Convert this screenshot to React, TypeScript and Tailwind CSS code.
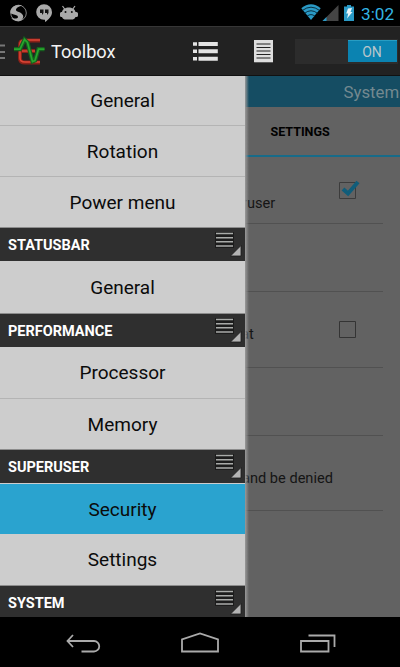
import React from "react";

function Item({ label, h, active, line }: { label: string; h: string; active?: boolean; line?: boolean }) {
  return (
    <div
      className={`${h} flex shrink-0 items-center justify-center pt-[2px] text-[19px] text-[#0b0b0b] ${
        active ? "bg-[#2aa3cf]" : "bg-[#cdcdcd]"
      } ${line ? "border-b border-[#b4b4b4]" : ""}`}
    >
      {label}
    </div>
  );
}

function Header({ label, h }: { label: string; h: string }) {
  return (
    <div className={`${h} flex shrink-0 justify-between overflow-hidden border-t border-[#8c8c8c] bg-[#2f2f2f] pl-2`}>
      <span className="pt-[8px] text-[14.5px] leading-5 font-bold text-white">{label}</span>
      <svg className="shrink-0" width="33" height="34" viewBox="0 0 33 34">
        <path d="M3 4h19v16H3z" fill="#1c1c1c" />
        <path d="M4 5.500h17M4 9.700h17M4 13.800h17M4 18h17" stroke="#a9aba9" strokeWidth="1.6" />
        <path d="M18.500 28L29 17.500v10.500z" fill="#b4b4b4" stroke="#1b1b1b" strokeWidth="0.8" />
      </svg>
    </div>
  );
}

function StatusBar() {
  return (
    <div className="flex h-[26px] shrink-0 items-center bg-black">
      <svg width="90" height="26" viewBox="0 0 90 26">
        <circle cx="18.5" cy="13" r="7.8" fill="none" stroke="#8f8f8f" strokeWidth="0.9" />
        <path d="M22 5.500C15 3.500 9.500 8 10.500 13C12.500 15 18 14.500 18 17C18 19 13 19 11 17.500C14 22 20 22.500 22.500 19C25 15 21 12.500 17.500 11.500C14.500 10.500 16 7 22 5.500z" fill="#aaa" />
        <path d="M44 4.200a8 8 0 0 1 8 8c0 4-3.500 7.500-7 9.800v-2.200h-1a7.800 7.800 0 0 1 0-15.600z" fill="#aaa" />
        <path d="M40 9.500h3.500v3.500l-1.500 2v-2h-2zM45 9.500h3.500v3.500l-1.500 2v-2h-2z" fill="#111" />
        <path d="M62.500 6l2.500 3.500M75 6l-2.500 3.500" stroke="#aaa" strokeWidth="1.200" />
        <path d="M62 12c1-6 12.500-6 13.500 0q2.500-.5 2.500 1.500v2q0 2-2.500 1.500c-1 3-3 2.500-6.800 2.500s-5.700 .5-6.700-2.500q-2 .5-2-1.500v-2q0-2 2-1.500z" fill="#aaa" />
        <circle cx="65.500" cy="12" r="1" fill="#111" />
        <circle cx="71.800" cy="12" r="1" fill="#111" />
      </svg>
      <div className="flex-1" />
      <svg width="60" height="26" viewBox="300 0 60 26">
        <path d="M301.300 8.200Q311 0.500 320.700 8.200L311 20z" fill="#2a9ac6" />
        <path d="M302.500 10.400Q311 4 319.500 10.400M304.500 13.300Q311 8.200 317.500 13.300M307 16.200Q311 13 315 16.200" fill="none" stroke="#052330" strokeWidth="0.9" />
        <path d="M338.500 5v16h-16z" fill="#444" />
        <path d="M322.500 21l4-4v4z" fill="#2a9ac6" />
        <path d="M347 5h4v1.500h3V21h-10V6.500h3z" fill="#2a9ac6" />
        <path d="M348 8.500l4-.5-1.500 4h2l-5.500 6.500 1.200-5h-2z" fill="#e9f5fa" />
      </svg>
      <span className="w-[40px] pt-px pl-[1px] text-[17.2px] leading-[26px] whitespace-nowrap text-[#33b5e5]">3:02</span>
    </div>
  );
}

function ActionBar() {
  return (
    <div className="flex h-[50px] shrink-0 items-center border-t border-b border-t-[#363636] border-b-[#111] bg-[#222]">
      <svg width="50" height="48" viewBox="0 27 50 48">
        <path d="M0 45.500h5M0 52h5M0 58h5" stroke="#777" strokeWidth="1.8" />
        <path d="M40 40.500H25q-5 0-5 4v14q0 4 5 4h15M22 51h13" fill="none" stroke="#8a2118" strokeWidth="4" />
        <path d="M40 40H25q-5 0-5 4v14q0 4 5 4h15M22 51h13" fill="none" stroke="#dc4536" strokeWidth="1.6" />
        <path d="M14 49.200h6l4.500-9.700 3 3 5 19 2.500-1 3.500-11.300h6" fill="none" stroke="#15601e" strokeWidth="4.2" />
        <path d="M14 49.200h6l4.500-9.700 3 3 5 19 2.500-1 3.500-11.300h6" fill="none" stroke="#28a62d" strokeWidth="1.7" />
      </svg>
      <span className="pt-px pl-px text-[18.2px] text-[#f3f3f3]">Toolbox</span>
      <div className="flex-1" />
      <svg width="90" height="48" viewBox="190 27 90 48">
        <path d="M198.500 44h19.300M198.500 51.200h19.300M198.500 58.700h19.300" stroke="#e4e4e4" strokeWidth="4" />
        <path d="M193 44h4M193 51.200h4M193 58.700h4" stroke="#e4e4e4" strokeWidth="3.6" />
        <path d="M254 40h19v22.300h-19z" fill="#dedede" />
        <path d="M256.500 44h14M256.500 47.500h14M256.500 51h14M256.500 54.500h14M256.500 58h14" stroke="#222" strokeWidth="1.1" />
      </svg>
      <div className="mr-[2px] ml-[15px] flex h-[25px] w-[103px] items-center justify-end bg-[#2c2c2c] pr-[1.5px]">
        <div className="flex h-[22px] w-[49px] items-center justify-center border-t border-[#279dc3] bg-[#0b83b1] pt-px text-[14px] text-[#b9c6cb]">
          ON
        </div>
      </div>
    </div>
  );
}

function Setting({ h, pt, text, textPt, check }: { h: string; pt: string; text?: string; textPt?: string; check?: React.ReactNode }) {
  return (
    <div className={`${h} ${pt} mr-[17px] flex shrink-0 justify-between border-b border-[#515151]`}>
      <div className={`${textPt ?? ""} text-[14.6px] leading-5 whitespace-nowrap text-[#151515]`}>{text}</div>
      {check}
    </div>
  );
}

export default function App() {
  return (
    <div className="flex h-[667px] w-[400px] flex-col overflow-hidden bg-black font-[Roboto,sans-serif]">
      <StatusBar />
      <ActionBar />
      <div className="flex h-[541px] shrink-0">
        <nav className="relative z-10 flex w-[245px] shrink-0 flex-col overflow-hidden bg-[#cdcdcd]">
          <Item label="General" h="h-[50px]" line />
          <Item label="Rotation" h="h-[51px]" line />
          <Item label="Power menu" h="h-[50px]" />
          <Header label="STATUSBAR" h="h-[34px]" />
          <Item label="General" h="h-[52px]" />
          <Header label="PERFORMANCE" h="h-[34px]" />
          <Item label="Processor" h="h-[52px]" line />
          <Item label="Memory" h="h-[50px]" />
          <Header label="SUPERUSER" h="h-[34px]" />
          <div className="h-px shrink-0 bg-[#cdcdcd]" />
          <Item label="Security" h="h-[50px]" active />
          <Item label="Settings" h="h-[51px]" />
          <Header label="SYSTEM" h="h-[32px]" />
        </nav>
        <main className="relative flex min-w-0 flex-1 flex-col bg-[#626262]">
          <div className="absolute inset-y-0 left-0 w-[4px] bg-linear-to-r from-[#999999] to-[#999999]/0" />
          <div className="flex h-[31px] shrink-0 items-center bg-[#154d63] pt-[2px] pl-[98.5px] text-[16.8px] whitespace-nowrap text-[#738990]">
            System
          </div>
          <div className="flex h-[50px] shrink-0 items-center border-b-2 border-[#176b89] pt-[3px] pl-[25.5px] text-[12.5px] font-bold text-black">
            SETTINGS
          </div>
          <Setting
            h="h-[67px]"
            pt="pt-[22px]"
            textPt="pt-[14px] -ml-[3px]"
            text="ruser"
            check={
              <svg width="45" height="24" viewBox="338 179 45 24">
                <path d="M339.500 182.500h16v16h-16z" fill="none" stroke="#3c3c3c" />
                <path d="M343 189l5 4.500 10-11.500" fill="none" stroke="#105d7a" strokeWidth="4" />
              </svg>
            }
          />
          <Setting h="h-[68px]" pt="pt-0" />
          <Setting
            h="h-[76px]"
            pt="pt-[26px]"
            textPt="pt-[6px] -ml-[4px]"
            text="at"
            check={
              <svg width="45" height="24" viewBox="338 318 45 24">
                <path d="M339.500 321.500h16v16h-16z" fill="none" stroke="#343434" />
              </svg>
            }
          />
          <Setting h="h-[68px]" pt="pt-0" />
          <Setting h="h-[75px]" pt="pt-[32px]" textPt="-ml-[3px]" text="and be denied" />
        </main>
      </div>
      <div className="flex h-[50px] shrink-0 bg-black">
        <svg width="400" height="50" viewBox="0 617 400 50" fill="none" stroke="#aaa" strokeWidth="1.8">
          <path d="M81.500 651.500h12.500a5.200 5.200 0 0 0 0-10.500H67.500M73 635l-5.500 6 5.500 6" />
          <path d="M182 651.500v-12l18-6 18 6v12z" />
          <path d="M301 641h27.500v10.500h-27.500zM308.500 635.500h26v11.500" />
        </svg>
      </div>
    </div>
  );
}
